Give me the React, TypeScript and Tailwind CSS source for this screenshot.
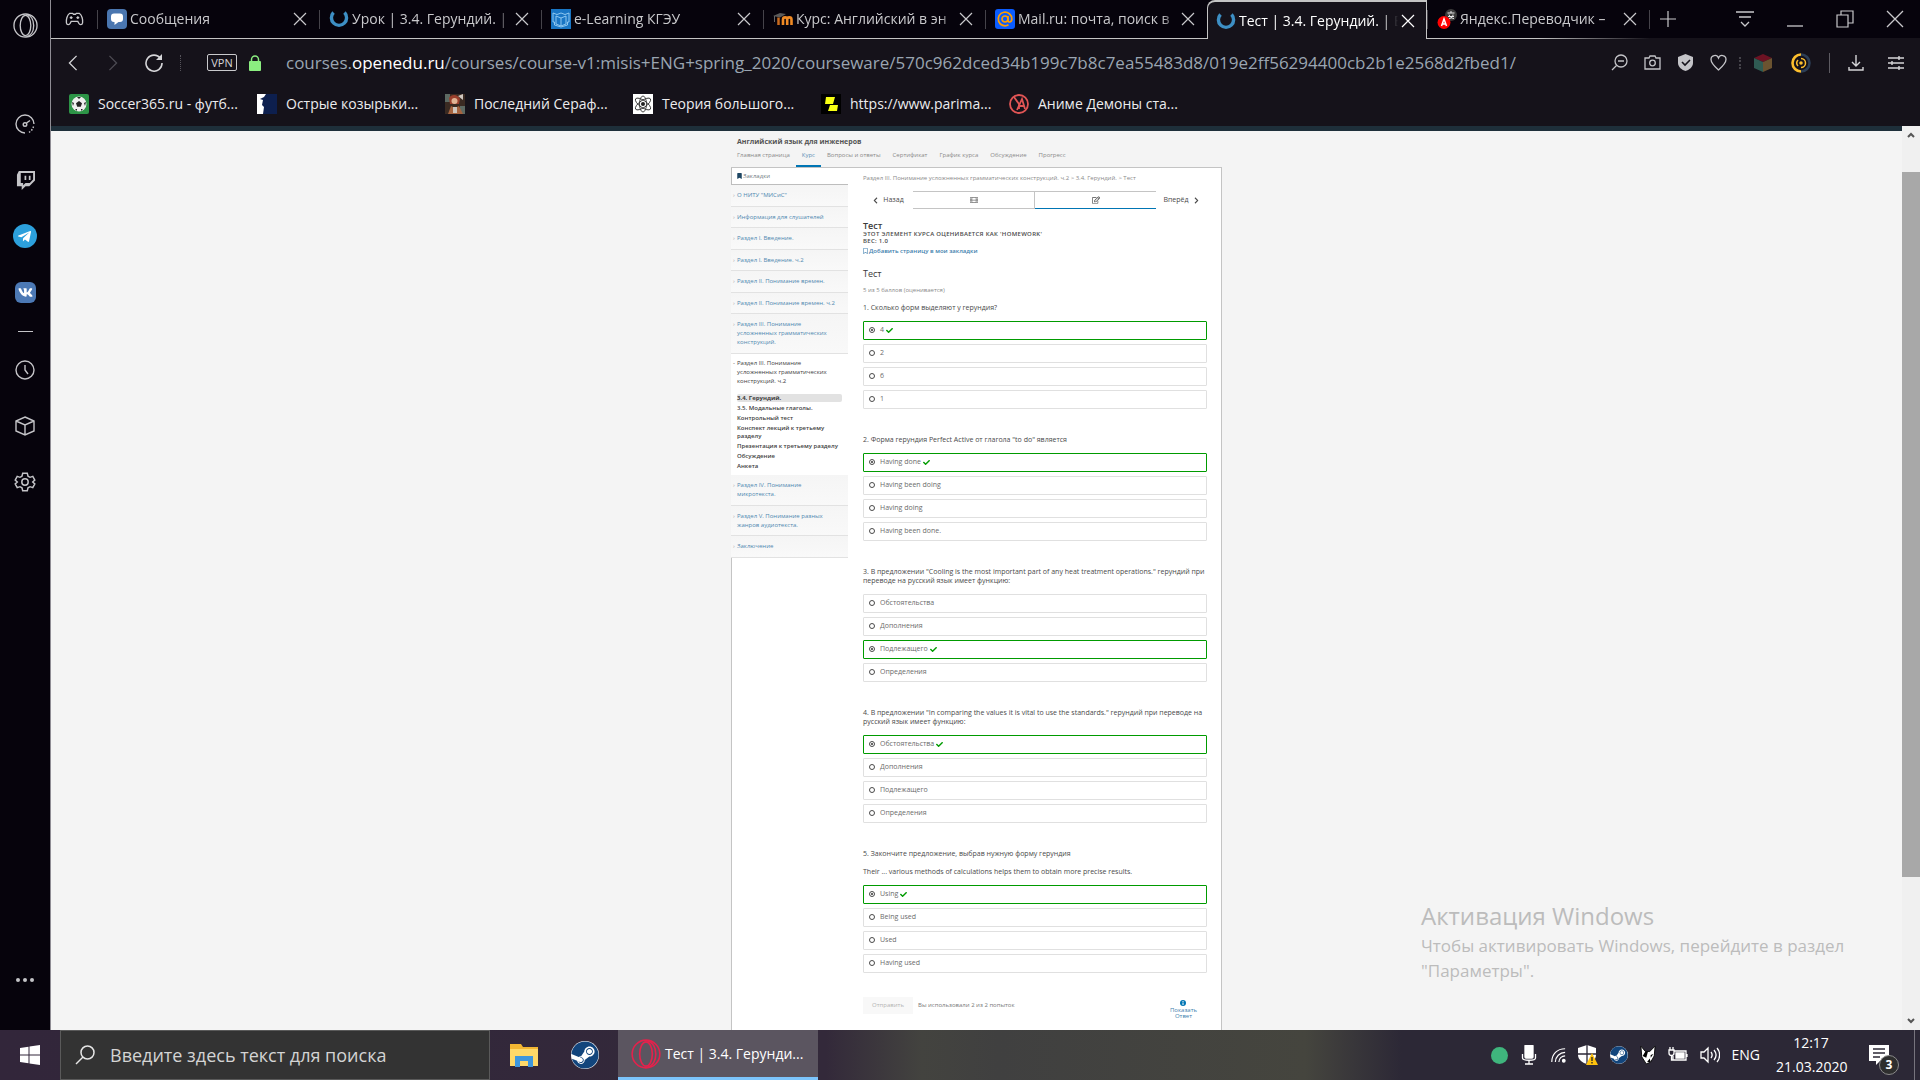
import { useState, type ReactNode } from 'react';
import {
  FaCheck,
  FaChevronLeft,
  FaChevronRight,
  FaFilm,
  FaSteam,
  FaTelegramPlane,
  FaVk,
  FaBookmark,
  FaRegBookmark,
  FaRegEdit,
} from 'react-icons/fa';

type Tab = {
  id: string;
  title: string;
  icon: ReactNode;
};

type Section = {
  title: string;
  children?: string[];
};

type Question = {
  id: string;
  text: string[];
  paragraphs?: boolean;
  options: string[];
  correct: number;
};

const sections: Section[] = [
  { title: 'О НИТУ "МИСиС"' },
  { title: 'Информация для слушателей' },
  { title: 'Раздел I. Введение.' },
  { title: 'Раздел I. Введение. ч.2' },
  { title: 'Раздел II. Понимание времен.' },
  { title: 'Раздел II. Понимание времен. ч.2' },
  { title: 'Раздел III. Понимание усложненных грамматических конструкций.' },
  {
    title: 'Раздел III. Понимание усложненных грамматических конструкций. ч.2',
    children: [
      '3.4. Герундий.',
      '3.5. Модальные глаголы.',
      'Контрольный тест',
      'Конспект лекций к третьему разделу',
      'Презентация к третьему разделу',
      'Обсуждение',
      'Анкета',
    ],
  },
  { title: 'Раздел IV. Понимание микротекста.' },
  { title: 'Раздел V. Понимание разных жанров аудиотекста.' },
  { title: 'Заключение' },
];

const questions: Question[] = [
  {
    id: 'q1',
    text: ['1. Сколько форм выделяют у герундия?'],
    options: ['4', '2', '6', '1'],
    correct: 0,
  },
  {
    id: 'q2',
    text: ['2. Форма герундия Perfect Active от глагола "to do" является'],
    options: ['Having done', 'Having been doing', 'Having doing', 'Having been done.'],
    correct: 0,
  },
  {
    id: 'q3',
    text: [
      '3. В предложении "Cooling is the most important part of any heat treatment operations." герундий при',
      'переводе на русский язык имеет функцию:',
    ],
    options: ['Обстоятельства', 'Дополнения', 'Подлежащего', 'Определения'],
    correct: 2,
  },
  {
    id: 'q4',
    text: [
      '4. В предложении "In comparing the values it is vital to use the standards." герундий при переводе на',
      'русский язык имеет функцию:',
    ],
    options: ['Обстоятельства', 'Дополнения', 'Подлежащего', 'Определения'],
    correct: 0,
  },
  {
    id: 'q5',
    text: [
      '5. Закончите предложение, выбрав нужную форму герундия',
      'Their ... various methods of calculations helps them to obtain more precise results.',
    ],
    paragraphs: true,
    options: ['Using', 'Being used', 'Used', 'Having used'],
    correct: 0,
  },
];

const courseNav = [
  'Главная страница',
  'Курс',
  'Вопросы и ответы',
  'Сертификат',
  'График курса',
  'Обсуждение',
  'Прогресс',
];

function OpenEduIcon() {
  return (
    <svg viewBox="0 0 20 20" className="h-5 w-5 shrink-0" fill="none">
      <path d="M4.5 3.5A7.6 7.6 0 1 0 15.5 3.5" stroke="#3d8fc4" strokeWidth="3.4" />
    </svg>
  );
}

const tabs: Tab[] = [
  {
    id: 'messages',
    title: 'Сообщения',
    icon: (
      <svg viewBox="0 0 20 20" className="h-5 w-5 shrink-0">
        <rect width="20" height="20" rx="4" fill="#4a76b0" />
        <path d="M7 4.5h6a3 3 0 0 1 3 3V10a3 3 0 0 1-3 3h-1.500l-4 3V13H7a3 3 0 0 1-3-3V7.500a3 3 0 0 1 3-3z" fill="#fff" />
      </svg>
    ),
  },
  { id: 'lesson', title: 'Урок | 3.4. Герундий. |', icon: <OpenEduIcon /> },
  {
    id: 'elearning',
    title: 'e-Learning КГЭУ',
    icon: (
      <svg viewBox="0 0 20 20" className="h-5 w-5 shrink-0" fill="none">
        <rect width="20" height="20" fill="#1976c5" />
        <path
          d="M2 4l4 1.500L10 4l4 1.500L18 4v9h-1.500v3L10 18l-6.500-2v-3H2zM5 7l5 2 5-2v8l-5 2-5-2zM10 9v8"
          stroke="#9bd0f5"
          strokeWidth="0.900"
        />
      </svg>
    ),
  },
  {
    id: 'moodle',
    title: 'Курс: Английский в эн',
    icon: (
      <svg viewBox="0 0 20 20" className="h-5 w-5 shrink-0" fill="none">
        <path d="M5.500 16V8.500" stroke="#c96a1c" strokeWidth="2.500" />
        <path d="M10 16V10.500a2 2 0 0 1 4.200 0V16M14.200 16V10.500a2 2 0 0 1 4.300 0V16" stroke="#f08a24" strokeWidth="2.600" />
        <path d="M0 7l7-3 6 1-6 3.500z" fill="#5a5a5a" />
        <path d="M1.500 7v6" stroke="#666" />
      </svg>
    ),
  },
  {
    id: 'mail',
    title: 'Mail.ru: почта, поиск в',
    icon: (
      <svg viewBox="0 0 20 20" className="h-5 w-5 shrink-0" fill="none">
        <rect width="20" height="20" rx="3" fill="#0a5cff" />
        <g stroke="#ff9e00" strokeWidth="1.700">
          <circle cx="10" cy="10" r="3" />
          <path d="M13 7v4.500c0 2.300 3.800 2 3.800-1.500A6.800 6.800 0 1 0 13.500 15.800" />
        </g>
      </svg>
    ),
  },
  { id: 'test', title: 'Тест | 3.4. Герундий. | E', icon: <OpenEduIcon /> },
  {
    id: 'translate',
    title: 'Яндекс.Переводчик –',
    icon: (
      <svg viewBox="0 0 20 20" className="h-5 w-5 shrink-0" fill="none">
        <circle cx="14" cy="6" r="6" fill="#3b3b3b" />
        <path d="M10.500 4h7M14 2v2M11 7.500h6M12 9.500c3 0 4-2 4-4M12 5.500c1 3 3 4 5 4" stroke="#e8e8e8" />
        <circle cx="7" cy="13.500" r="6.500" fill="#f00" />
        <path d="M4.500 17L7 10l2.500 7M5.300 15h3.400" stroke="#fff" strokeWidth="1.500" />
      </svg>
    ),
  },
];

const bookmarks: Tab[] = [
  {
    id: 'soccer',
    title: 'Soccer365.ru - футб...',
    icon: (
      <svg viewBox="0 0 20 20" className="h-5 w-5 shrink-0">
        <rect width="20" height="20" rx="2" fill="#2d9447" />
        <circle cx="10" cy="10" r="7.500" fill="#eee" />
        <path d="M10 7l3 2.200-1.200 3.600H8.200L7 9.200zM8 3h4l-2 2zM3 8l2 1-1 3zM17 8l-2 1 1 3zM6 15l2 0 0 2zM14 15l-2 0 0 2z" fill="#222" />
      </svg>
    ),
  },
  {
    id: 'blinders',
    title: 'Острые козырьки...',
    icon: (
      <svg viewBox="0 0 20 20" className="h-5 w-5 shrink-0">
        <rect width="20" height="20" fill="#0d1f4e" />
        <path d="M0 0h9L7 3 3 5l3 1-1 5 2 2-1 7H0z" fill="#fff" />
      </svg>
    ),
  },
  {
    id: 'seraph',
    title: 'Последний Сераф...',
    icon: (
      <svg viewBox="0 0 20 20" className="h-5 w-5 shrink-0">
        <rect width="20" height="20" fill="#3a2a22" />
        <path d="M0 0h5v8H0zM15 12h5v8h-5z" fill="#5d6a63" />
        <path d="M4 4c2-4 9-4 11 1l-1 5H5z" fill="#9a3f2c" />
        <circle cx="9.500" cy="7" r="3" fill="#e0b394" />
        <path d="M3 20l3-8 4 2 4-2 4 8z" fill="#a5633f" />
        <path d="M8 13h4v6H8zM13 2l5-2v6z" fill="#cfc6be" />
      </svg>
    ),
  },
  {
    id: 'theory',
    title: 'Теория большого...',
    icon: (
      <svg viewBox="0 0 20 20" className="h-5 w-5 shrink-0" fill="none">
        <rect width="20" height="20" fill="#fff" />
        <g stroke="#333" strokeWidth="0.900">
          <ellipse cx="10" cy="10" rx="9" ry="3.500" transform="rotate(35 10 10)" />
          <ellipse cx="10" cy="10" rx="9" ry="3.500" transform="rotate(-35 10 10)" />
          <ellipse cx="10" cy="10" rx="3.500" ry="8" />
        </g>
        <circle cx="10" cy="10" r="2" fill="#222" />
      </svg>
    ),
  },
  {
    id: 'parimatch',
    title: 'https://www.parima...',
    icon: (
      <svg viewBox="0 0 20 20" className="h-5 w-5 shrink-0">
        <rect width="20" height="20" fill="#000" />
        <path d="M5 3h9l-2 7H4zM9 11h8l-1 6H7z" fill="#f8ff13" />
      </svg>
    ),
  },
  {
    id: 'anime',
    title: 'Аниме Демоны ста...',
    icon: (
      <svg viewBox="0 0 20 20" className="h-5 w-5 shrink-0" fill="none" stroke="#e15555" strokeWidth="1.800">
        <circle cx="10" cy="10" r="9" />
        <path d="M5 3l5 7v5M8 16l5-11 3 10M9 12h6" />
      </svg>
    ),
  },
];

function CloseIcon() {
  return (
    <svg viewBox="0 0 14 14" className="h-3.5 w-3.5" stroke="currentColor" strokeWidth="1.200">
      <path d="M1 1l12 12M13 1L1 13" />
    </svg>
  );
}

function OperaIcon({ className }: { className: string }) {
  return (
    <svg viewBox="0 0 26 26" className={className} fill="none" stroke="currentColor" strokeWidth="1.400">
      <circle cx="13" cy="13" r="12" />
      <ellipse cx="13" cy="13" rx="5.500" ry="10.500" />
      <path d="M14 1.500c5 1 7.500 6 7.500 11.500s-2.500 10.500-7.500 11.500" />
    </svg>
  );
}

function SteamBadge({ className }: { className: string }) {
  return (
    <span className={`flex items-center justify-center rounded-full bg-white ${className}`}>
      <FaSteam className="h-full w-full text-[#12457c]" />
    </span>
  );
}

function SideButton({ label, children }: { label: string; children: ReactNode }) {
  return (
    <button type="button" aria-label={label} className="flex h-14 w-full items-center justify-center">
      {children}
    </button>
  );
}

function OperaSidebar() {
  return (
    <aside className="flex w-[50px] shrink-0 flex-col bg-[#06030c] text-[#c4c4c8]">
      <button type="button" aria-label="Opera" className="flex h-24 justify-center pt-[13px]">
        <OperaIcon className="h-[25px] w-[25px]" />
      </button>
      <SideButton label="Speed Dial">
        <svg viewBox="0 0 20 20" className="h-5 w-5" fill="none" stroke="currentColor" strokeWidth="1.400">
          <path d="M10 19A9 9 0 1 1 19 10" />
          <path d="M18.500 12.500a9 9 0 0 1-5 6" strokeDasharray="1.500 1.500" />
          <circle cx="10" cy="10.500" r="1.800" />
          <path d="M11.500 9L15 6.500" />
        </svg>
      </SideButton>
      <SideButton label="Twitch">
        <svg viewBox="0 0 20 20" className="h-[19px] w-[19px]">
          <path d="M3 0L1 4v12h5v4l4-4h4l6-6V0z" fill="currentColor" />
          <path d="M5 2h13v7l-3.500 3.500H10L7.500 15v-2.500H5z" fill="#06030c" />
          <path d="M9 5h1.800v4.500H9zM13.500 5h1.800v4.500h-1.800z" fill="currentColor" />
        </svg>
      </SideButton>
      <SideButton label="Telegram">
        <span className="flex h-6 w-6 items-center justify-center rounded-full bg-[#2ca0dc]">
          <FaTelegramPlane className="mr-0.5 h-[15px] w-[15px] text-white" />
        </span>
      </SideButton>
      <SideButton label="VK">
        <span className="flex h-[21px] w-[21px] items-center justify-center rounded-md bg-[#4c79b5]">
          <FaVk className="h-[15px] w-[15px] text-white" />
        </span>
      </SideButton>
      <div className="flex h-[22px] items-center justify-center">
        <div className="h-px w-[15px] bg-[#c4c4c8]" />
      </div>
      <SideButton label="История">
        <svg viewBox="0 0 20 20" className="h-5 w-5" fill="none" stroke="currentColor" strokeWidth="1.400">
          <circle cx="10" cy="10" r="9" />
          <path d="M10 5v5l3 4" />
        </svg>
      </SideButton>
      <SideButton label="Расширения">
        <svg viewBox="0 0 20 20" className="h-5 w-5" fill="none" stroke="currentColor" strokeWidth="1.400">
          <path d="M10 1l9 4v10l-9 4-9-4V5zM1 5l9 4 9-4M10 9v10" />
        </svg>
      </SideButton>
      <SideButton label="Настройки">
        <svg viewBox="0 0 24 24" className="h-[22px] w-[22px]" fill="none" stroke="currentColor" strokeWidth="1.600">
          <circle cx="12" cy="12" r="3.500" />
          <path d="M9.500 2.500h5l.8 3.200 2.200 1.200 3-1 2.200 4-2.300 2.100 2.300 2.100-2.200 4-3-1-2.200 1.200-.8 3.200h-5l-.8-3.200-2.200-1.200-3 1-2.200-4L3.600 12 1.300 9.900l2.200-4 3 1 2.200-1.200z" />
        </svg>
      </SideButton>
      <button type="button" aria-label="Ещё" className="mt-auto mb-12 flex justify-center gap-[3px]">
        <span className="h-1 w-1 rounded-full bg-current" />
        <span className="h-1 w-1 rounded-full bg-current" />
        <span className="h-1 w-1 rounded-full bg-current" />
      </button>
    </aside>
  );
}

function TabBar({ active, onSelect }: { active: string; onSelect: (id: string) => void }) {
  return (
    <div className="flex h-[39px] bg-[#06030c] text-[#c9c9cc]">
      <button type="button" aria-label="GX" className="flex w-[46px] items-center justify-center border-b border-[#c4c4c4]">
        <svg viewBox="0 0 20 16" className="h-4 w-[19px]" fill="none" stroke="currentColor" strokeWidth="1.400">
          <path d="M5 2h3l1 1h2l1-1h3c3 2 4 7 3.500 10-.5 2.500-3 2.500-4 .5l-1-2H6.500l-1 2c-1 2-3.500 2-4-.5C1 9 2 4 5 2z" />
          <path d="M6.500 5v3M5 6.500h3M12 6.500h3M13.500 5v3" />
        </svg>
      </button>
      {tabs.map((tab) => {
        const isActive = tab.id === active;
        return (
          <div
            key={tab.id}
            className={
              isActive
                ? 'flex w-[220px] items-center gap-[3px] rounded-tl-lg border-x border-t-2 border-[#c4c4c4] bg-[#15121a] pr-[11px] pl-2 text-white'
                : 'flex w-[222px] items-center gap-[3px] border-b border-[#c4c4c4] pr-3 nth-last-2:[border-image:linear-gradient(to_right,#c4c4c4_50%,#15121a)_1]'
            }
          >
            {!isActive && <span className="mr-1.5 h-[19px] w-px bg-[#45434a]" />}
            {tab.icon}
            <button
              type="button"
              onClick={() => onSelect(tab.id)}
              className="min-w-0 flex-1 mask-r-from-90% text-left text-sm whitespace-nowrap"
            >
              {tab.title}
            </button>
            <button type="button" aria-label="Закрыть вкладку">
              <CloseIcon />
            </button>
          </div>
        );
      })}
      <div className="flex flex-1 items-center border-b border-[#15121a]">
        <span className="h-[19px] w-px bg-[#45434a]" />
        <button type="button" aria-label="Новая вкладка" className="ml-2.5">
          <svg viewBox="0 0 16 16" className="h-4 w-4" stroke="currentColor" strokeWidth="1.200">
            <path d="M8 0v16M0 8h16" />
          </svg>
        </button>
        <div className="ml-auto flex items-center gap-8 pr-4">
          <button type="button" aria-label="Меню вкладок">
            <svg viewBox="0 0 18 18" className="h-[18px] w-[18px]" fill="none" stroke="currentColor" strokeWidth="1.300">
              <path d="M0 2h18M3 7h12M5 12l4 4 4-4" />
            </svg>
          </button>
          <button type="button" aria-label="Свернуть">
            <svg viewBox="0 0 18 18" className="h-[18px] w-[18px]" stroke="currentColor" strokeWidth="1.300">
              <path d="M1 16h16" />
            </svg>
          </button>
          <button type="button" aria-label="Развернуть">
            <svg viewBox="0 0 18 18" className="h-[18px] w-[18px]" fill="none" stroke="currentColor" strokeWidth="1.200">
              <path d="M1 5h11v12H1zM5 5V1h12v12h-5" />
            </svg>
          </button>
          <button type="button" aria-label="Закрыть">
            <svg viewBox="0 0 18 18" className="h-[18px] w-[18px]" stroke="currentColor" strokeWidth="1.300">
              <path d="M1 1l16 16M17 1L1 17" />
            </svg>
          </button>
        </div>
      </div>
    </div>
  );
}

function AddressBar() {
  return (
    <div className="flex h-[47px] items-center pr-4 pl-4 text-[#d5d5d8]">
      <button type="button" aria-label="Назад">
        <svg viewBox="0 0 12 18" className="h-4 w-3" fill="none" stroke="currentColor" strokeWidth="1.500">
          <path d="M10 1L2 9l8 8" />
        </svg>
      </button>
      <button type="button" aria-label="Вперёд" className="ml-7 text-[#4c4a52]">
        <svg viewBox="0 0 12 18" className="h-4 w-3" fill="none" stroke="currentColor" strokeWidth="1.500">
          <path d="M2 1l8 8-8 8" />
        </svg>
      </button>
      <button type="button" aria-label="Обновить" className="ml-[26px]">
        <svg viewBox="0 0 18 18" className="h-[18px] w-[18px]" fill="none" stroke="currentColor" strokeWidth="1.600">
          <path d="M15.500 4.500A8 8 0 1 0 17 9" />
          <path d="M17 0v6h-6z" fill="currentColor" stroke="none" />
        </svg>
      </button>
      <span className="ml-[17px] h-4 border-l border-dotted border-[#55535a]" />
      <button type="button" className="ml-[26px] h-[17px] w-[30px] rounded-xs border border-[#c9c9cc] text-[11px] leading-[15px]">
        VPN
      </button>
      <svg viewBox="0 0 12 16" className="ml-3 h-4 w-3" fill="none">
        <path d="M2.500 7V4.500a3.500 3.500 0 0 1 7 0V7" stroke="#8bee80" strokeWidth="1.500" />
        <rect y="6" width="12" height="10" rx="1" fill="#8bee80" />
      </svg>
      <div className="ml-[25px] min-w-0 flex-1 text-[17px] whitespace-nowrap text-[#9aa5b1]">
        courses.<span className="text-white">openedu.ru</span>
        /courses/course-v1:misis+ENG+spring_2020/courseware/570c962dced34b199c7b8c7ea55483d8/019e2ff56294400cb2b1e2568d2fbed1/
      </div>
      <div className="flex items-center gap-4 text-[#c4c4c8]">
        <svg viewBox="0 0 17 17" className="h-[17px] w-[17px]" fill="none" stroke="currentColor" strokeWidth="1.300">
          <circle cx="10" cy="7" r="6" />
          <path d="M5.500 11.500L1 16M7 7h6" />
        </svg>
        <svg viewBox="0 0 17 17" className="h-[17px] w-[17px]" fill="none" stroke="currentColor" strokeWidth="1.300">
          <path d="M1 4h4l1-2h5l1 2h4v11H1z" />
          <circle cx="8.500" cy="9" r="2.800" />
        </svg>
        <svg viewBox="0 0 17 17" className="h-[17px] w-[17px]" fill="none">
          <path d="M8.500 0L16 3v6c0 4-4 7-7.500 8C5 16 1 13 1 9V3z" fill="currentColor" />
          <path d="M5 8l3 3 5-5" stroke="#15121a" strokeWidth="1.600" />
        </svg>
        <svg viewBox="0 0 17 17" className="h-[17px] w-[17px]" fill="none" stroke="currentColor" strokeWidth="1.300">
          <path d="M8.500 16C4 12 1 9 1 5.500 1 1 7 0 8.500 4 10 0 16 1 16 5.500 16 9 13 12 8.500 16z" />
        </svg>
      </div>
      <span className="ml-3 h-3 border-l-2 border-dotted border-[#45434a]" />
      <svg viewBox="0 0 20 20" className="ml-3 h-5 w-5">
        <path d="M10 1l9 4-9 4-9-4z" fill="#6d1223" />
        <path d="M1 5l9 4v10l-9-4z" fill="#2f5b53" />
        <path d="M19 5l-9 4v10l9-4z" fill="#6b5330" />
      </svg>
      <svg viewBox="0 0 20 20" className="ml-[18px] h-5 w-5" fill="none">
        <path d="M10 1.500a8.500 8.500 0 0 0 0 17" stroke="#fdbf2d" strokeWidth="2.600" />
        <path d="M10 1.500a8.500 8.500 0 0 1 0 17" stroke="#2c3e55" strokeWidth="2.600" />
        <path d="M10 5.500a4.500 4.500 0 0 1 0 9M7 7a4.500 4.500 0 0 0 0 6" stroke="#fdbf2d" strokeWidth="1.500" />
        <circle cx="10" cy="10" r="1.800" fill="#fdbf2d" />
      </svg>
      <span className="ml-[18px] h-5 w-px bg-[#5d5b62]" />
      <svg viewBox="0 0 16 16" className="ml-[18px] h-4 w-4" fill="none" stroke="currentColor" strokeWidth="1.400">
        <path d="M8 0v11M4 7l4 4 4-4M1 12v3h14v-3" />
      </svg>
      <svg viewBox="0 0 16 16" className="ml-6 h-4 w-4" stroke="currentColor" strokeWidth="1.400">
        <path d="M0 3h16M0 8h16M0 13h16M11 1v4M4 6v4M11 11v4" />
      </svg>
    </div>
  );
}

function BookmarksBar() {
  return (
    <nav className="flex h-10 items-center pb-1 pl-[18px]">
      {bookmarks.map((b) => (
        <a key={b.id} href="#" className="flex w-[188px] items-center gap-[9px] text-sm whitespace-nowrap text-[#ececee]">
          {b.icon}
          {b.title}
        </a>
      ))}
    </nav>
  );
}

function CourseSidebar() {
  return (
    <nav className="-ml-px self-start bg-white text-[6px] leading-[9px] text-[#4f88b0]">
      <a href="#" className="flex h-[17px] items-center gap-px border-b border-l border-[#bdbdbd] pl-[5px] text-[#6f7a82]">
        <FaBookmark className="h-1.5 w-[5px] text-[#1e4663]" />
        Закладки
      </a>
      {sections.map((s) =>
        s.children ? (
          <div key={s.title} className="px-1.5 py-[5px] text-[#414141]">
            <a href="#" className="relative block">
              <span className="absolute -left-1">-</span>
              {s.title}
            </a>
            <ul className="mt-2 flex flex-col gap-0.5 leading-[8px]">
              {s.children.map((child, i) => (
                <li key={child} className={i === 0 ? 'rounded-xs bg-[#e2e2e2] font-bold' : 'font-semibold'}>
                  <a href="#">{child}</a>
                </li>
              ))}
            </ul>
          </div>
        ) : (
          <a
            key={s.title}
            href="#"
            className="relative block border-b border-[#e2e2e2] bg-linear-to-b from-[#f5f5f5] to-[#f9f9f9] pt-1.5 pr-2 pl-1.5 odd:pb-[5px] even:pb-1.5"
          >
            <span className="absolute left-0.5 text-[#a9a9a9]">›</span>
            {s.title}
          </a>
        )
      )}
    </nav>
  );
}

function QuestionBlock({ question }: { question: Question }) {
  const [selected, setSelected] = useState(question.correct);

  return (
    <fieldset className="mt-[26px] text-[7px] first-of-type:mt-[9px]">
      <legend className={question.paragraphs ? 'mb-[9px] flex flex-col gap-[9px]' : 'mb-[9px]'}>
        {question.text.map((line) => (
          <span key={line} className="block leading-[9px] whitespace-nowrap">
            {line}
          </span>
        ))}
      </legend>
      <div className="flex flex-col gap-1">
        {question.options.map((option, i) => (
          <label
            key={option}
            className={
              i === question.correct
                ? 'flex h-[19px] items-center rounded-[1px] border border-[#009b00] pl-[5px] text-[#6b6b6b]'
                : 'flex h-[19px] items-center rounded-[1px] border border-[#e0e0e0] pl-[5px] text-[#6b6b6b]'
            }
          >
            <input
              type="radio"
              name={question.id}
              checked={selected === i}
              onChange={() => setSelected(i)}
              className="mr-[5px] mb-px h-1.5 w-1.5 appearance-none rounded-full border border-[#4a4a4a] bg-clip-content p-px checked:bg-[#333]"
            />
            {option}
            {i === question.correct && <FaCheck className="ml-0.5 h-[7px] w-[7px] text-[#009b00]" />}
          </label>
        ))}
      </div>
    </fieldset>
  );
}

function CoursePage() {
  return (
    <main className="flex min-w-0 flex-1 flex-col overflow-hidden border-t-[5px] border-[#1e2f3a] bg-[#f4f4f4]">
      <div className="mx-auto flex w-[491px] flex-1 flex-col">
        <h1 className="pt-1.5 pl-1.5 text-[7px] leading-[10px] font-bold text-[#555]">Английский язык для инженеров</h1>
        <nav className="flex h-5 text-[6px] leading-[17px] text-[#8a8a8a]">
          {courseNav.map((item) => (
            <a
              key={item}
              href="#"
              className={
                item === 'Курс'
                  ? 'border-b-2 border-[#0075b4] px-1.5 text-[#5b90b5]'
                  : 'border-b-2 border-transparent px-1.5'
              }
            >
              {item}
            </a>
          ))}
        </nav>
        <div className="grid flex-1 grid-cols-[116px_1fr] border border-b-0 border-[#c4c4c4] bg-white">
          <CourseSidebar />
          <div className="pt-[5px] pr-3.5 pl-[15px] text-[6px] text-[#4a4a4a]">
            <p className="leading-[10px] text-[#8a8a8a]">
              Раздел III. Понимание усложненных грамматических конструкций. ч.2 &gt; 3.4. Герундий. &gt; Тест
            </p>
            <div className="mt-2 flex h-[18px] text-[7px] leading-[16px] text-[#4a4a4a]">
              <button type="button" className="flex w-[50px] items-center justify-center gap-1">
                <FaChevronLeft className="h-[7px] w-[7px]" />
                Назад
              </button>
              <button type="button" aria-label="Видео" className="flex flex-1 items-center justify-center border-y border-r border-[#c4c4c4]">
                <FaFilm className="h-2 w-2 text-[#777]" />
              </button>
              <button
                type="button"
                aria-label="Тест"
                className="flex flex-1 items-center justify-center border-t border-b border-t-[#c4c4c4] border-b-[#0075b4]"
              >
                <FaRegEdit className="h-2 w-2" />
              </button>
              <button type="button" className="flex w-[51px] items-center justify-center gap-1">
                Вперёд
                <FaChevronRight className="h-[7px] w-[7px]" />
              </button>
            </div>
            <h2 className="mt-[11px] text-[9px] leading-[11px] font-semibold text-[#3a3a3a]">Тест</h2>
            <p className="leading-[7px] font-semibold tracking-wider uppercase">Этот элемент курса оценивается как 'Homework'</p>
            <p className="leading-[7px] font-semibold tracking-wider uppercase">Вес: 1.0</p>
            <button type="button" className="mt-0.5 flex items-center gap-px leading-[8px] font-semibold text-[#3f7fae]">
              <FaRegBookmark className="h-1.5 w-[5px]" />
              Добавить страницу в мои закладки
            </button>
            <h3 className="mt-3.5 text-[9px] leading-[10px] text-[#3a3a3a]">Тест</h3>
            <p className="mt-[7px] leading-[8px] text-[#8a8a8a]">5 из 5 баллов (оценивается)</p>
            <form onSubmit={(e) => e.preventDefault()}>
              {questions.map((q) => (
                <QuestionBlock key={q.id} question={q} />
              ))}
              <div className="mt-6 flex">
                <button type="submit" disabled className="h-[17px] w-[50px] bg-[#f8f8f8] text-[#b4b4b4]">
                  Отправить
                </button>
                <span className="ml-[5px] leading-[17px] text-[#7a7a7a]">Вы использовали 2 из 2 попыток</span>
                <button type="button" className="mt-[3px] mr-2.5 ml-auto flex flex-col items-center leading-[6px] text-[#3f7fae]">
                  <svg viewBox="0 0 6 6" className="h-1.5 w-1.5">
                    <circle cx="3" cy="3" r="3" fill="#0075b4" />
                    <path d="M3 1v1M3 2.500V5" stroke="#fff" />
                  </svg>
                  <span className="mt-px">Показать</span>
                  <span>Ответ</span>
                </button>
              </div>
            </form>
          </div>
        </div>
      </div>
    </main>
  );
}

function ScrollBar() {
  return (
    <div className="flex w-[18px] shrink-0 flex-col items-center bg-[#f0f0f0] py-1.5 text-[#555]">
      <svg viewBox="0 0 8 6" className="h-1.5 w-2" fill="none" stroke="currentColor" strokeWidth="2">
        <path d="M1 5l3-3 3 3" />
      </svg>
      <div className="mt-[34px] w-full flex-5 bg-[#a8a8a8]" />
      <div className="flex-1" />
      <svg viewBox="0 0 8 6" className="h-1.5 w-2" fill="none" stroke="currentColor" strokeWidth="2">
        <path d="M1 1l3 3 3-3" />
      </svg>
    </div>
  );
}

function TaskBar() {
  return (
    <footer className="flex h-[50px] shrink-0 items-center bg-[linear-gradient(to_right,#32263a,#33293a_43%,#43433f_48%,#404040_52%,#45453e_68%,#2c2836_73%,#2c2836)] text-white">
      <button type="button" aria-label="Пуск" className="flex w-[60px] justify-center">
        <svg viewBox="0 0 20 20" className="h-5 w-5" fill="currentColor">
          <path d="M0 3l8.500-1.200v7.700H0zM9.500 1.600L20 0v9.500H9.500zM0 10.500h8.500v7.700L0 17zM9.500 10.500H20V20L9.500 18.400z" />
        </svg>
      </button>
      <label className="flex h-full w-[430px] items-center gap-[15px] border border-[#5a5a5a] bg-[#333] pl-3.5">
        <svg viewBox="0 0 20 20" className="h-5 w-5 shrink-0" fill="none" stroke="#e6e6e6" strokeWidth="1.500">
          <circle cx="12.500" cy="7.500" r="6.500" />
          <path d="M8 12l-7 7" />
        </svg>
        <input
          type="text"
          aria-label="Поиск"
          placeholder="Введите здесь текст для поиска"
          className="w-full bg-transparent text-lg outline-none placeholder:text-[#d4d4d4]"
        />
      </label>
      <button type="button" aria-label="Проводник" className="flex w-[67px] justify-center">
        <svg viewBox="0 0 28 24" className="h-6 w-7">
          <path d="M0 1h11l2 3h15v19H0z" fill="#f2b632" />
          <path d="M0 6h28v17H0z" fill="#ffd968" />
          <path d="M5 24V13h18v11h-5v-6h-8v6z" fill="#3f97dc" />
        </svg>
      </button>
      <button type="button" aria-label="Steam" className="flex w-[61px] justify-center pr-1.5">
        <SteamBadge className="h-7 w-7" />
      </button>
      <button type="button" className="flex h-full w-[200px] items-center gap-1 border-b-3 border-[#7cc4fb] bg-[#5b5560] pl-[13px] text-sm whitespace-nowrap">
        <OperaIcon className="h-[30px] w-[30px] text-[#e3224c]" />
        Тест | 3.4. Герунди...
      </button>
      <div className="ml-auto flex items-center gap-3">
        <span className="h-[17px] w-[17px] rounded-full bg-[#3fb57d]" />
        <svg viewBox="0 0 18 20" className="h-5 w-[18px]" fill="none" stroke="currentColor" strokeWidth="1.300">
          <rect x="5" y="0" width="8" height="13" rx="1" fill="currentColor" />
          <path d="M2.500 9v4c0 3 13 3 13 0V9M9 15v4M5 19h8" />
        </svg>
        <svg viewBox="0 0 18 18" className="h-4 w-4" fill="none" stroke="currentColor" strokeWidth="1.300">
          <path d="M2 17C2 8 8 2 17 2M6 17c0-6 5-11 11-11M10 17c0-4 3-7 7-7" />
          <circle cx="15.500" cy="15.500" r="1.500" fill="currentColor" />
        </svg>
        <svg viewBox="0 0 20 20" className="h-5 w-5">
          <path d="M9 0l9 3v7c0 5-5 8-9 9-4-1-9-4-9-9V3z" fill="#fff" />
          <path d="M9 0v19M0 9h18" stroke="#2c2836" strokeWidth="1.300" />
          <path d="M14 8l6 12H8z" fill="#ffc20e" />
          <path d="M14 12v4M14 17v1.500" stroke="#222" strokeWidth="1.300" />
        </svg>
        <SteamBadge className="h-[18px] w-[18px]" />
        <svg viewBox="0 0 18 20" className="h-5 w-4">
          <path d="M1 0l5 6h5l6-6-1 11-4 7-5 2-5-8z" fill="#fff" stroke="#000" />
          <path d="M6 6h3l-2 7-4-2zM12 10l3-1-3 4zM8 18l3-4 1 4z" fill="#000" />
        </svg>
        <svg viewBox="0 0 20 16" className="h-4 w-5" fill="none" stroke="currentColor" strokeWidth="1.300">
          <path d="M6 4h12v9H5V9M1 3h5v3a2 2 0 0 1-5 0zM2 3V0M5 3V0M3.500 8v5H5M19 7v3" />
          <path d="M8 6h8v5H8z" fill="currentColor" />
        </svg>
        <svg viewBox="0 0 20 18" className="h-[18px] w-5" fill="none" stroke="currentColor" strokeWidth="1.300">
          <path d="M1 6h3l4-4v14l-4-4H1zM11 6c1.500 2 1.500 4 0 6M14 4c2.500 3 2.500 7 0 10M17 2c3.500 4 3.500 10 0 14" />
        </svg>
        <span className="text-sm">ENG</span>
      </div>
      <time className="ml-4 flex w-[70px] flex-col text-center text-sm leading-[24px]">
        <span>12:17</span>
        <span>21.03.2020</span>
      </time>
      <button type="button" aria-label="Уведомления" className="relative ml-[23px]">
        <svg viewBox="0 0 20 20" className="h-5 w-5">
          <path d="M0 0h20v16h-9l-4 4v-4H0z" fill="#fff" />
          <path d="M4 4h12M4 8h12M4 12h7" stroke="#2c2836" strokeWidth="1.300" />
        </svg>
        <span className="absolute top-2.5 left-2.5 h-5 w-5 rounded-full border border-[#8a8a8a] bg-[#2e2e2e] text-xs leading-[18px] font-bold">3</span>
      </button>
      <span className="mr-[5px] ml-[25px] h-full w-px bg-[#77747d]" />
    </footer>
  );
}

export default function App() {
  const [activeTab, setActiveTab] = useState('test');

  return (
    <div className="relative flex h-screen flex-col overflow-hidden font-['Open_Sans','Noto_Sans',sans-serif]">
      <div className="flex min-h-0 flex-1">
        <OperaSidebar />
        <div className="flex min-w-0 flex-1 flex-col border-l border-[#8f8d94] bg-[#15121a]">
          <TabBar active={activeTab} onSelect={setActiveTab} />
          <AddressBar />
          <BookmarksBar />
          <div className="flex min-h-0 flex-1">
            <CoursePage />
            <ScrollBar />
          </div>
        </div>
      </div>
      <TaskBar />
      <div className="pointer-events-none absolute right-[60px] bottom-[97px] w-[439px] text-[#bcbcbc]">
        <p className="text-2xl leading-[34px]">Активация Windows</p>
        <p className="text-[17px] leading-[25px]">Чтобы активировать Windows, перейдите в раздел "Параметры".</p>
      </div>
    </div>
  );
}
